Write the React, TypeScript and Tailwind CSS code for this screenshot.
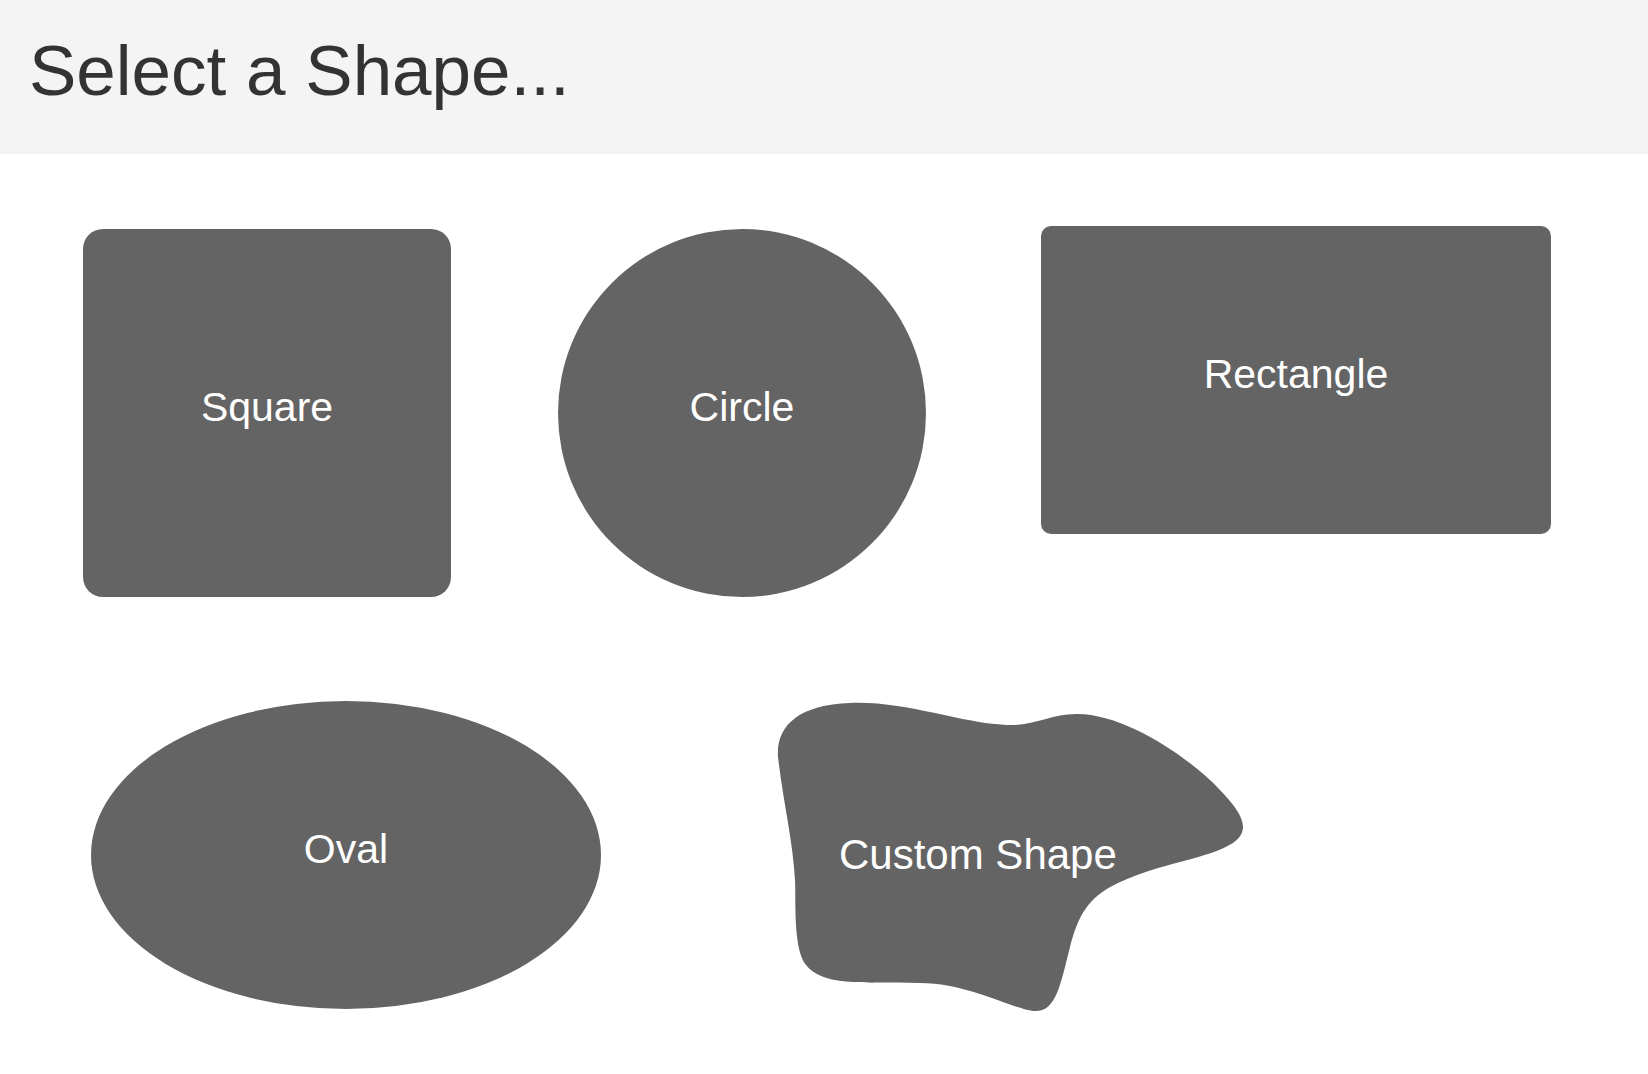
import React from "react";

const labelCls =
  "text-white text-[41px] leading-none font-['Liberation_Sans',Arial,sans-serif]";

function CustomShape() {
  return (
    <div className="relative w-[470px] h-[312px] ml-[177px]">
      <svg
        width="470"
        height="312"
        viewBox="0 0 470 312"
        className="block overflow-visible"
      >
        <path
          fill="#646464"
          d="M 0 56
             C -2 25, 20 4, 72 2
             C 130 0, 180 22, 229 24
             C 258 25, 272 13, 298 13
             C 345 12, 410 55, 442 89
             C 462 110, 475 128, 455 142
             C 430 158, 382 162, 340 182
             C 310 196, 300 215, 292 246
             C 282 285, 278 312, 255 310
             C 235 308, 190 282, 142 282
             C 80 281, 45 285, 28 264
             C 15 248, 18 200, 17 179
             C 15 140, 5 100, 0 56 Z"
        />
      </svg>
      <span className="absolute left-[61px] top-[133px] whitespace-nowrap text-white text-[42px] leading-none font-['Liberation_Sans',Arial,sans-serif]">
        Custom Shape
      </span>
    </div>
  );
}

export default function App() {
  return (
    <div className="min-h-[1074px] w-full bg-white font-['Liberation_Sans',Arial,sans-serif]">
      <header className="h-[154px] bg-[#f4f4f4] pl-[29px] pt-[35px]">
        <h1 className="text-[71px] leading-none text-[#333333] font-normal">
          Select a Shape...
        </h1>
      </header>

      <div className="flex items-start pl-[83px] pt-[72px]">
        <div className="mt-[3px] w-[368px] h-[368px] rounded-[20px] bg-[#646464] flex items-center justify-center pb-[11px]">
          <span className={labelCls}>Square</span>
        </div>
        <div className="mt-[3px] ml-[107px] w-[368px] h-[368px] rounded-full bg-[#646464] flex items-center justify-center pb-[11px]">
          <span className={labelCls}>Circle</span>
        </div>
        <div className="ml-[115px] w-[510px] h-[308px] rounded-[10px] bg-[#646464] flex items-center justify-center pb-[11px]">
          <span className={labelCls}>Rectangle</span>
        </div>
      </div>

      <div className="flex items-start pl-[91px] pt-[104px]">
        <div className="w-[510px] h-[308px] rounded-[50%] bg-[#646464] flex items-center justify-center pb-[11px]">
          <span className={labelCls}>Oval</span>
        </div>
        <CustomShape />
      </div>
    </div>
  );
}
